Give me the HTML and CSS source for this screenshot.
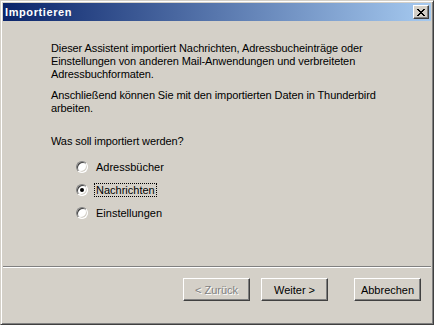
FILE: index.html
```html
<!DOCTYPE html>
<html lang="de">
<head>
  <meta charset="UTF-8" />
  <title>Importieren</title>
  <link rel="stylesheet" href="styles.css">
</head>
<body>
  <div class="window">
    <div class="titlebar">
      <span class="title">Importieren</span>
      <button class="close-btn" aria-label="Schließen">
        <svg width="8" height="7" viewBox="0 0 8 7">
          <path d="M0 0h2v1h1v1h2V1h1V0h2v1H7v1H6v1H5v1h1v1h1v1h1v1H6V6H5V5H3v1H2v1H0V6h1V5h1V4h1V3H2V2H1V1H0z" fill="#000"/>
        </svg>
      </button>
    </div>

    <div class="wizard">
      <div class="content">
        <p>Dieser Assistent importiert Nachrichten, Adressbucheinträge oder<br>Einstellungen von anderen Mail-Anwendungen und verbreiteten<br>Adressbuchformaten.</p>
        <p>Anschließend können Sie mit den importierten Daten in Thunderbird<br>arbeiten.</p>
        <p class="question">Was soll importiert werden?</p>

        <div class="options">
          <label class="option"><span class="radio"></span><span class="label">Adressbücher</span></label>
          <label class="option"><span class="radio checked"></span><span class="label focused">Nachrichten</span></label>
          <label class="option"><span class="radio"></span><span class="label">Einstellungen</span></label>
        </div>
      </div>

      <div class="separator"></div>

      <div class="buttons">
        <button class="btn back" disabled>&lt; Zurück</button>
        <button class="btn next">Weiter &gt;</button>
        <button class="btn">Abbrechen</button>
      </div>
    </div>
  </div>
</body>
</html>
```

FILE: styles.css
```css
:root {
  --face: #d4d0c8;
  --shadow: #808080;
  --dark: #404040;
  --light: #ffffff;
}

* {
  box-sizing: border-box;
}

body {
  margin: 0;
  background: var(--face);
  font-family: "Liberation Sans", Arial, sans-serif;
  font-size: 11px;
  color: #000;
}

/* Window frame */
.window {
  width: 434px;
  height: 325px;
  display: flex;
  flex-direction: column;
  background: var(--face);
  border: 1px solid;
  border-color: var(--face) var(--dark) var(--dark) var(--face);
  box-shadow: inset 1px 1px var(--light), inset -1px -1px var(--shadow);
  padding: 2px;
}

/* Title bar */
.titlebar {
  height: 18px;
  display: flex;
  align-items: center;
  justify-content: space-between;
  padding: 0 2px 0 2px;
  background: linear-gradient(to right, #0a246a, #a6caf0);
}

.title {
  color: #fff;
  font-weight: bold;
  font-size: 11px;
  letter-spacing: 0.6px;
}

.close-btn {
  width: 16px;
  height: 14px;
  padding: 0;
  display: flex;
  align-items: center;
  justify-content: center;
  background: var(--face);
  border: 1px solid;
  border-color: var(--light) var(--dark) var(--dark) var(--light);
  box-shadow: inset -1px -1px var(--shadow);
}

/* Wizard page */
.wizard {
  flex: 1;
  display: flex;
  flex-direction: column;
}

.content {
  flex: 1;
  padding: 21px 0 0 48px;
}

.content p {
  margin: 0 0 8px;
  line-height: 13px;
  letter-spacing: -0.1px;
}

.content p.question {
  margin-top: 20px;
  margin-bottom: 12px;
}

.options {
  display: flex;
  flex-direction: column;
  gap: 9px;
  padding-left: 25px;
}

.option {
  display: flex;
  align-items: center;
  height: 14px;
}

.radio {
  width: 12px;
  height: 12px;
  border-radius: 50%;
  border: 1px solid;
  border-color: var(--shadow) var(--light) var(--light) var(--shadow);
  box-shadow: inset 1px 1px var(--dark), inset -1px -1px var(--face);
  background: #fff;
  display: flex;
  align-items: center;
  justify-content: center;
  margin-right: 6px;
}

.radio.checked::after {
  content: '';
  width: 4px;
  height: 4px;
  border-radius: 50%;
  background: #000;
}

.label {
  padding: 0 1px;
  border: 1px solid transparent;
  line-height: 12px;
}

.label.focused {
  border: 1px dotted #000;
}

/* Separator and buttons */
.separator {
  height: 2px;
  border-top: 1px solid var(--shadow);
  border-bottom: 1px solid var(--light);
}

.buttons {
  display: flex;
  justify-content: flex-end;
  margin: 10px 0 21px;
  padding-right: 10px;
}

.btn {
  width: 67px;
  height: 23px;
  padding: 0;
  font-family: inherit;
  font-size: 11px;
  color: #000;
  background: var(--face);
  border: 1px solid;
  border-color: var(--light) var(--dark) var(--dark) var(--light);
  box-shadow: inset -1px -1px var(--shadow);
}

.btn.back {
  margin-right: 11px;
  color: var(--shadow);
  text-shadow: 1px 1px var(--light);
}

.btn.next {
  margin-right: 26px;
}
```
